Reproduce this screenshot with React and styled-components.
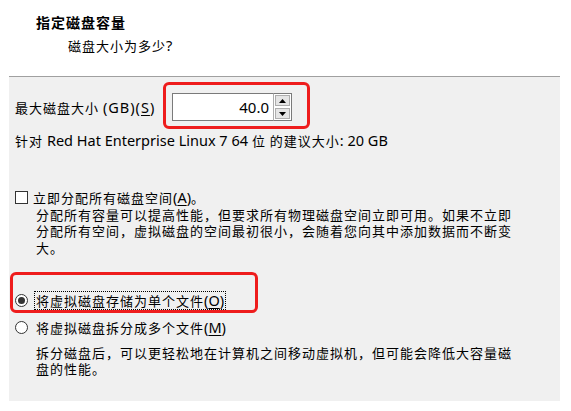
import React from "react";
import styled, { createGlobalStyle } from "styled-components";

const Global = createGlobalStyle`
  html, body { margin: 0; padding: 0; background: #ffffff; }
  body {
    font-family: "Noto Sans", "Noto Sans CJK SC", sans-serif;
    font-size: 13px;
    color: #000;
  }
`;

const Page = styled.div`
  width: 571px;
  height: 411px;
  background: #fff;
  overflow: hidden;
`;

const Header = styled.div`
  padding: 12px 0 0 36px;
  height: 76px;
  box-sizing: border-box;
`;

const Title = styled.div`
  font-family: "Noto Sans CJK SC", sans-serif;
  font-weight: 700;
  font-size: 14px;
  letter-spacing: 1px;
  line-height: 20px;
`;

const Subtitle = styled.div`
  font-family: "Noto Sans CJK SC", sans-serif;
  font-size: 13px;
  letter-spacing: 1px;
  line-height: 20px;
  margin: 3px 0 0 32px;
`;

const Panel = styled.div`
  margin: 0 11px 0 9px;
  height: 325px;
  box-sizing: border-box;
  border-top: 1px solid #a0a0a0;
  background: #f0f0f0;
  padding: 16px 0 0 6px;
  display: flex;
  flex-direction: column;
`;

const Row = styled.div`
  display: flex;
  align-items: center;
  gap: ${(p) => p.$gap || 0}px;
  margin-top: ${(p) => p.$mt || 0}px;
  height: ${(p) => (p.$h ? p.$h + "px" : "auto")};
`;

const Cjk = styled.span`
  font-family: "Noto Sans CJK SC", sans-serif;
  letter-spacing: 1px;
  line-height: 16px;
  white-space: nowrap;
`;

const FieldLabel = styled(Cjk)`
  width: 157px;
  flex: none;
`;

const Latin = styled.span`
  font-family: "Noto Sans", "Noto Sans CJK SC", sans-serif;
  font-size: 14.5px;
  letter-spacing: ${(p) => p.$ls || 0}px;
`;

const Key = styled.span`
  text-decoration: underline;
  text-underline-offset: 2px;
`;

const SpinWrap = styled.div`
  position: relative;
  display: flex;
  height: 28px;
`;

const Highlight = styled.div`
  position: absolute;
  left: ${(p) => p.$l}px;
  top: ${(p) => p.$t}px;
  width: ${(p) => p.$w}px;
  height: ${(p) => p.$h}px;
  border: 3px solid #ee1c1c;
  border-radius: 6px;
  box-sizing: border-box;
  pointer-events: none;
`;

const NumberField = styled.div`
  width: 101px;
  height: 28px;
  box-sizing: border-box;
  border: 1px solid #7a7a7a;
  border-right: none;
  background: #fff;
  font-family: "Noto Sans", sans-serif;
  font-size: 15px;
  display: flex;
  align-items: center;
  justify-content: flex-end;
  padding-right: 4px;
`;

const Spinner = styled.div`
  width: 19px;
  height: 28px;
  box-sizing: border-box;
  border: 1px solid #7a7a7a;
  border-left: 1px solid #adadad;
  background: #fff;
  display: flex;
  flex-direction: column;
`;

const SpinBtn = styled.div`
  flex: 1;
  margin: 1px;
  background: #e5e5e5;
  border: 1px solid #adadad;
  display: flex;
  align-items: center;
  justify-content: center;
`;

const Desc = styled.div`
  font-family: "Noto Sans CJK SC", sans-serif;
  letter-spacing: 1px;
  line-height: 16.3px;
  margin-left: 21px;
  margin-top: ${(p) => p.$mt || 0}px;
  width: 480px;
`;

const CheckBox = styled.span`
  width: 13px;
  height: 13px;
  box-sizing: border-box;
  border: 1px solid #333;
  background: #fff;
  flex: none;
`;

const Radio = styled.span`
  width: 13px;
  height: 13px;
  box-sizing: border-box;
  border: 1px solid #333;
  border-radius: 50%;
  background: #fff;
  flex: none;
  display: flex;
  align-items: center;
  justify-content: center;
  &::after {
    content: "";
    display: ${(p) => (p.$checked ? "block" : "none")};
    width: 7px;
    height: 7px;
    border-radius: 50%;
    background: #333;
  }
`;

const RadioLabel = styled.span`
  padding: 1px 1px;
  border: 1px ${(p) => (p.$focus ? "dotted #000" : "solid transparent")};
  font-family: "Noto Sans CJK SC", sans-serif;
  letter-spacing: 1px;
  line-height: 15px;
  white-space: nowrap;
`;

const Annotated = styled.div`
  position: relative;
`;

const Arrow = ({ up }) => (
  <svg width="7" height="4" viewBox="0 0 7 4">
    <path d={up ? "M3.5 0 L7 4 L0 4 Z" : "M0 0 L7 0 L3.5 4 Z"} fill="#000" />
  </svg>
);

export default function App() {
  return (
    <Page>
      <Global />
      <Header>
        <Title>指定磁盘容量</Title>
        <Subtitle>
          磁盘大小为多少<Latin>?</Latin>
        </Subtitle>
      </Header>
      <Panel>
        <Row $h={28}>
          <FieldLabel>
            最大磁盘大小 <Latin $ls={1}>(GB)(<Key>S</Key>)</Latin>
          </FieldLabel>
          <SpinWrap>
            <NumberField>40.0</NumberField>
            <Spinner>
              <SpinBtn>
                <Arrow up />
              </SpinBtn>
              <SpinBtn>
                <Arrow />
              </SpinBtn>
            </Spinner>
            <Highlight $l={-9} $t={-11} $w={147} $h={47} />
          </SpinWrap>
        </Row>
        <Row $mt={11} $h={17}>
          <Cjk>
            针对 <Latin>Red Hat Enterprise Linux 7 64</Latin> 位 的建议大小
            <Latin>: 20 GB</Latin>
          </Cjk>
        </Row>
        <Row $mt={40} $h={16} $gap={5}>
          <CheckBox />
          <Cjk>
            立即分配所有磁盘空间<Latin>(<Key>A</Key>)</Latin>。
          </Cjk>
        </Row>
        <Desc $mt={2}>
          分配所有容量可以提高性能，但要求所有物理磁盘空间立即可用。如果不立即分配所有空间，虚拟磁盘的空间最初很小，会随着您向其中添加数据而不断变大。
        </Desc>
        <Annotated>
          <Row $mt={35} $h={20} $gap={6}>
            <Radio $checked />
            <RadioLabel $focus>
              将虚拟磁盘存储为单个文件<Latin>(<Key>O</Key>)</Latin>
            </RadioLabel>
          </Row>
          <Highlight $l={-5} $t={16} $w={248} $h={41} />
        </Annotated>
        <Row $mt={7} $h={20} $gap={6}>
          <Radio />
          <RadioLabel>
            将虚拟磁盘拆分成多个文件<Latin>(<Key>M</Key>)</Latin>
          </RadioLabel>
        </Row>
        <Desc $mt={7}>
          拆分磁盘后，可以更轻松地在计算机之间移动虚拟机，但可能会降低大容量磁盘的性能。
        </Desc>
      </Panel>
    </Page>
  );
}
